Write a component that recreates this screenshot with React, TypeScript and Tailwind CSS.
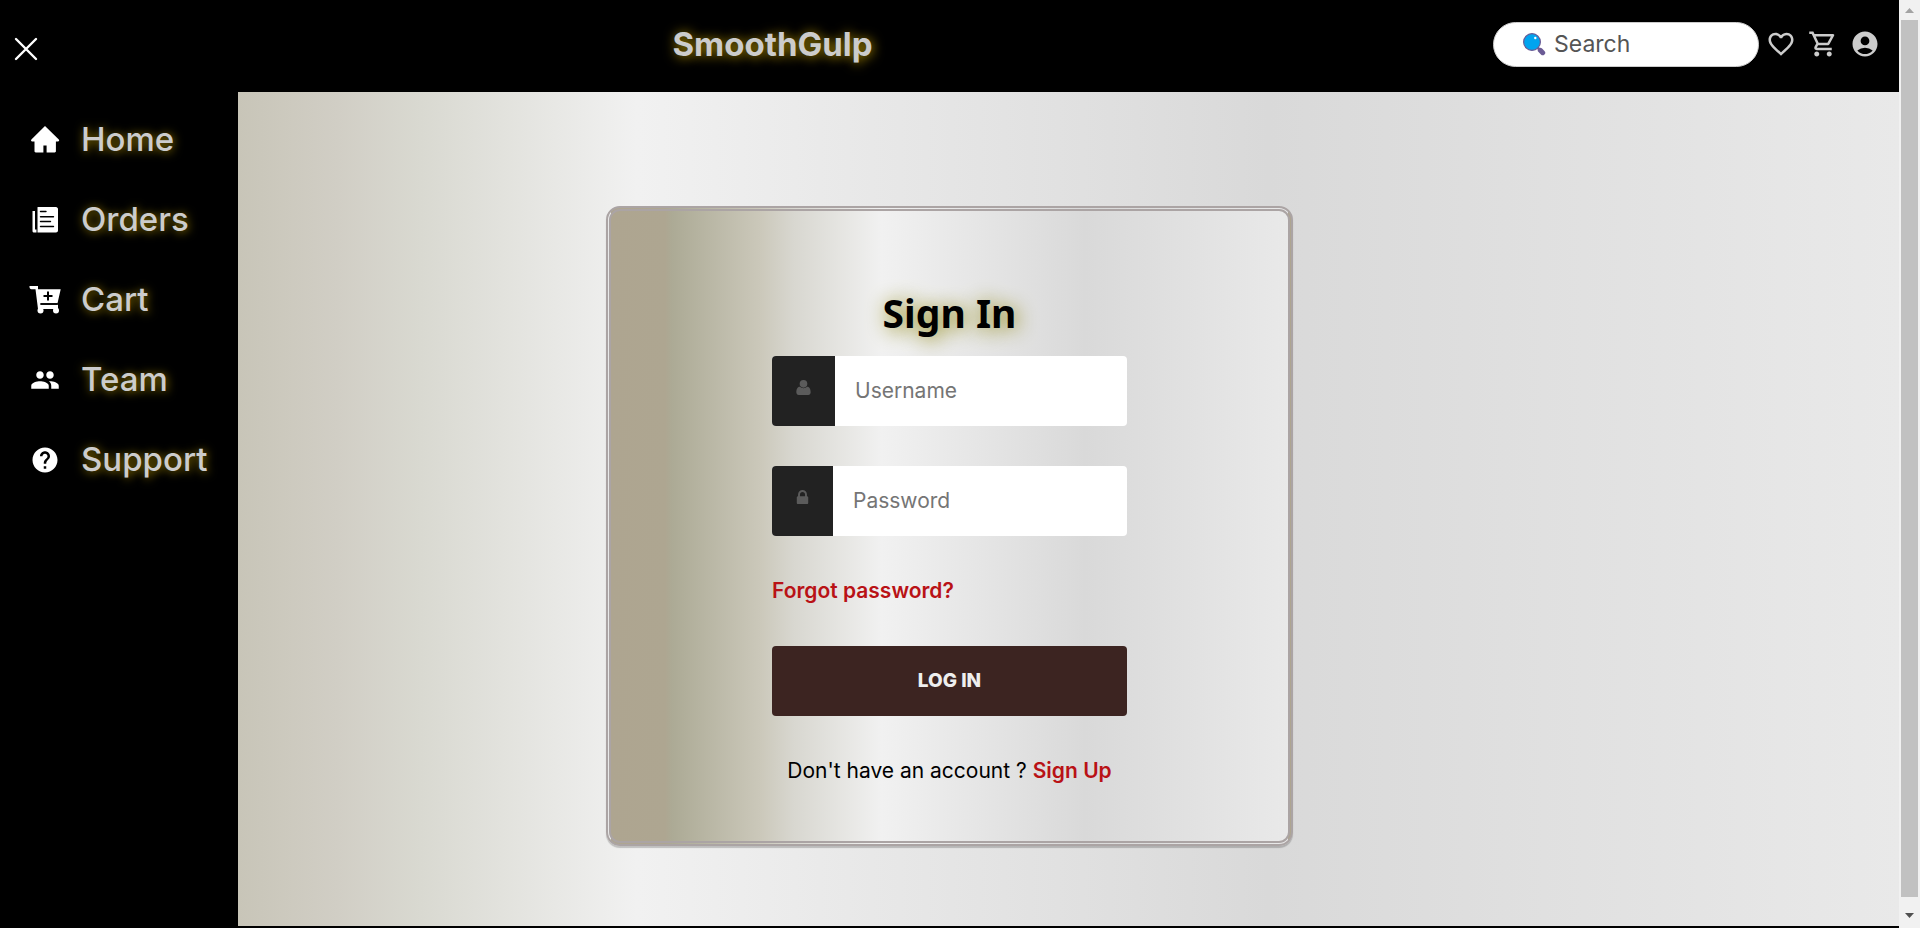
import React from "react";
import {
  MdAccountCircle,
  MdFavoriteBorder,
  MdHelp,
  MdOutlineShoppingCart,
  MdPeople,
} from "react-icons/md";

function HomeIcon() {
  return (
    <svg viewBox="0 0 32 32" className="size-8" fill="currentColor" aria-hidden="true">
      <path d="M16 2 2.400 15.600c-.8.8-.3 1.900.8 1.900H5.500v9.800c0 .7.6 1.200 1.200 1.200h7.700v-7h3.200v7h8.100c.7 0 1.200-.5 1.200-1.200v-9.800h2.100c1.100 0 1.600-1.100.8-1.900z" />
    </svg>
  );
}

function OrdersIcon() {
  return (
    <svg viewBox="0 0 32 32" className="size-8" aria-hidden="true">
      <path fill="currentColor" d="M9 3h18c1 0 2 1 2 2v21.500c0 1-1 2-2 2H8.500V4c0-.5 0-1 .5-1zM3.500 7H6v18.500h1.500v3h-3A1.500 1.500 0 0 1 3.500 27z" />
      <path stroke="#000" strokeWidth="1.400" strokeLinecap="round" d="M11.500 7.500H17M11.500 12.700h13M11.500 17.500h10M11.500 22.500h13" />
    </svg>
  );
}

function CartIcon() {
  return (
    <svg viewBox="0 0 32 32" className="size-8" aria-hidden="true">
      <g fill="currentColor">
        <path d="M.5 2H9v3.200h22.700l-3.200 14H11.500v1.600h17.500V25H9L6.500 5.200H2.500C1.200 5.200.5 4 .5 3z" />
        <circle cx="11.500" cy="26.500" r="3" />
        <circle cx="27" cy="26.500" r="3" />
      </g>
      <path stroke="#000" strokeWidth="2" d="M14.500 12h9M19 7.500v9" />
      <path stroke="#000" strokeWidth="1.600" d="M11.500 20h17" />
    </svg>
  );
}

function UserIcon() {
  return (
    <svg viewBox="0 0 43 45" className="h-[15px] w-[15px]" fill="currentColor" aria-hidden="true">
      <circle cx="21.500" cy="11.500" r="11.500" />
      <path d="M10.500 20.500c6.500 5.500 15.500 5.500 22 0C40 20.500 43 28 43 37c0 5-3 8-7 8H7c-4 0-7-3-7-8 0-9 3-16.500 10.500-16.500z" />
    </svg>
  );
}

function LockIcon() {
  return (
    <svg viewBox="0 128 1152 1408" className="h-[14px] w-[13px]" fill="currentColor" aria-hidden="true">
      <path d="M320 768h512v-192q0-106-75-181t-181-75-181 75-75 181v192zm832 96v576q0 40-28 68t-68 28h-960q-40 0-68-28t-28-68v-576q0-40 28-68t68-28h32v-192q0-184 132-316t316-132 316 132 132 316v192h32q40 0 68 28t28 68z" />
    </svg>
  );
}

function Magnifier() {
  return (
    <svg viewBox="0 0 24 24" className="size-6 shrink-0" aria-hidden="true">
      <path stroke="#6b5b95" strokeWidth="2.500" d="m15.500 15.500 3 3" />
      <path stroke="#6b5b95" strokeWidth="5" strokeLinecap="round" d="m18.300 18.300 2.400 2.400" />
      <circle cx="10" cy="10" r="8.400" fill="#00a4ef" stroke="#6b5b95" strokeWidth="1.200" />
      <circle cx="13.300" cy="6" r="1.200" fill="#fff" />
    </svg>
  );
}

const links = [
  { label: "Home", icon: <HomeIcon /> },
  { label: "Orders", icon: <OrdersIcon /> },
  { label: "Cart", icon: <CartIcon /> },
  { label: "Team", icon: <MdPeople className="size-[30px]" /> },
  { label: "Support", icon: <MdHelp className="size-[30px]" /> },
];

function Header() {
  return (
    <header className="flex h-23 items-center justify-between bg-black pr-[19px] pb-1 text-[#ccc]">
      <button aria-label="Close menu" className="mt-2.5 px-3 text-white">
        <svg viewBox="0 0 28 28" className="size-7" stroke="currentColor" strokeWidth="2.400" strokeLinecap="round" aria-hidden="true">
          <path d="m4 4 20 20M24 4 4 24" />
        </svg>
      </button>
      <h1 className="text-[33px] leading-10 font-bold [text-shadow:1px_1px_12px_#b89600]">SmoothGulp</h1>
      <div className="flex items-center gap-3">
        <label className="-mr-[5px] flex h-[45px] w-[266px] items-center gap-2 rounded-full border border-[#ccc] bg-white px-7">
          <Magnifier />
          <input aria-label="Search" placeholder="Search" className="w-full min-w-0 text-[23px] text-black outline-none placeholder:text-[#555]" />
        </label>
        <button aria-label="Favourites"><MdFavoriteBorder className="size-[30px]" /></button>
        <button aria-label="Cart"><MdOutlineShoppingCart className="size-[30px]" /></button>
        <button aria-label="Account"><MdAccountCircle className="size-[30px]" /></button>
      </div>
    </header>
  );
}

function Field({ id, label, type, icon }: { id: string; label: string; type: string; icon: React.ReactNode }) {
  return (
    <div className="flex h-[70px] overflow-hidden rounded bg-white">
      <label htmlFor={id} aria-label={label} className="flex shrink-0 items-center bg-[#222] px-6 pb-2 text-[#5b5b5b]">
        {icon}
      </label>
      <input id={id} type={type} placeholder={label} className="min-w-0 flex-1 px-5 text-[21px] text-black outline-none placeholder:text-[#757575]" />
    </div>
  );
}

function SignIn() {
  return (
    <form className="flex w-[687px] flex-col items-center rounded-[14px] border-[5px] border-double border-[#aba4a4] bg-[linear-gradient(90deg,#aea590_0%,#aea691_8%,#acaa95_9%,#cbc8ba_22%,#d8d7d0_27%,#f1f1f1_40%,#d9d9d9_70%,#e9e9e9_100%)] pt-20 pb-[55px] shadow-[0_2px_1px_#00000033]">
      <div className="flex w-[355px] flex-col">
        <h2 className="mb-[21px] text-center font-['Noto_Sans',sans-serif] text-[39px] leading-11 font-bold text-black [text-shadow:2px_2px_20px_#8a8200]">Sign In</h2>
        <div className="flex flex-col gap-10">
          <Field id="username" label="Username" type="text" icon={<UserIcon />} />
          <Field id="password" label="Password" type="password" icon={<LockIcon />} />
          <a href="#forgot" className="self-start text-[21px] leading-[30px] font-semibold text-[#b91216]">Forgot password?</a>
          <button type="submit" className="h-[70px] rounded bg-[#3c2421] text-[19px] font-extrabold text-[#eee]">LOG IN</button>
          <p className="text-center text-[21px] leading-[30px] whitespace-nowrap text-black">
            Don't have an account ? <a href="#signup" className="font-semibold text-[#b91216]">Sign Up</a>
          </p>
        </div>
      </div>
    </form>
  );
}

export default function App() {
  return (
    <div className="flex min-h-screen bg-black font-[Inter,sans-serif]">
      <div className="flex flex-1 flex-col">
        <Header />
        <div className="flex flex-1 pb-0.5">
          <nav className="w-[238px] pt-2 pl-[29px]">
            {links.map((l) => (
              <a
                key={l.label}
                href={`#${l.label.toLowerCase()}`}
                className="flex h-20 items-center gap-5 text-[33px] font-medium text-[#ccc] [text-shadow:1px_1px_10px_#9c8000]"
              >
                <span className="flex w-8 justify-center text-white">{l.icon}</span>
                {l.label}
              </a>
            ))}
          </nav>
          <main className="flex flex-1 items-start bg-[linear-gradient(90deg,#c8c5b8_0%,#d1cec5_6%,#d9d9d1_11%,#f1f1f1_24%,#d9d9d9_62%,#e9e9e9_100%)] pt-[114px] pl-[368px]">
            <SignIn />
          </main>
        </div>
      </div>
      <div className="flex w-[21px] flex-col items-center bg-[#f1f1f1]" aria-hidden="true">
        <svg viewBox="0 0 9 5" className="mt-2 mb-[7px] h-[5px] w-[9px]"><path fill="#a3a3a3" d="M0 5 4.500 0 9 5z" /></svg>
        <div className="w-[17px] flex-1 bg-[#c1c1c1]" />
        <svg viewBox="0 0 9 5" className="mt-4 mb-2.5 h-[5px] w-[9px]"><path fill="#505050" d="M0 0 4.500 5 9 0z" /></svg>
      </div>
    </div>
  );
}
